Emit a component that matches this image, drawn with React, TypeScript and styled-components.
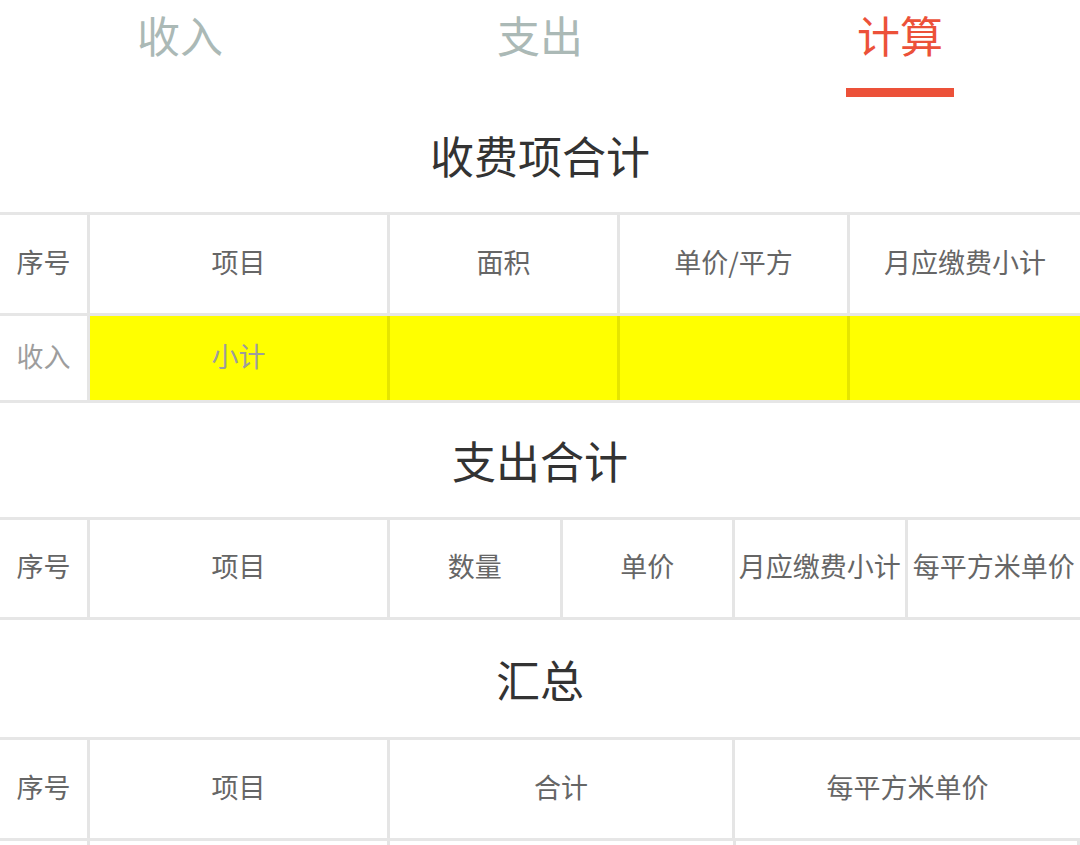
import styled, { createGlobalStyle } from "styled-components";

const GlobalStyle = createGlobalStyle`
    body {
        margin: 0;
        background: #fff;
        font-family: "Noto Sans CJK SC", "Noto Sans", sans-serif;
    }
`;

const Page = styled.div`
    width: 1080px;
    overflow: hidden;
`;

const TabBar = styled.nav`
    display: grid;
    grid-template-columns: repeat(3, 1fr);
`;

const Tab = styled.div<{ $active?: boolean }>`
    display: flex;
    flex-direction: column;
    align-items: center;
    height: 97px;
    color: ${(p) => (p.$active ? "#ec5139" : "#abb9b6")};
`;

const TabLabel = styled.span`
    height: 76px;
    line-height: 68px;
    font-size: 43px;
`;

const Underline = styled.div<{ $active?: boolean }>`
    margin-top: 12px;
    width: 108px;
    height: 9px;
    background: ${(p) => (p.$active ? "#ec5139" : "transparent")};
`;

const SectionTitle = styled.h2<{ $height: number }>`
    margin: 0;
    height: ${(p) => p.$height}px;
    display: flex;
    align-items: center;
    justify-content: center;
    font-size: 44px;
    font-weight: normal;
    color: #333;
`;

const Table = styled.div`
    border-top: 3px solid #e6e6e6;
`;

const Row = styled.div<{ $cols: number; $height: number; $split?: string }>`
    display: grid;
    grid-template-columns: 90px 300px ${(p) => p.$split ?? `repeat(${p.$cols}, 1fr)`};
    height: ${(p) => p.$height}px;
    border-bottom: 3px solid #e6e6e6;
`;

const Cell = styled.div<{ $fill?: string; $muted?: boolean; $edge?: boolean }>`
    display: flex;
    align-items: center;
    justify-content: center;
    box-sizing: border-box;
    padding-bottom: 6px;
    background: ${(p) => p.$fill ?? "#fff"};
    border-right: 3px solid rgba(0, 0, 0, 0.1);
    font-size: 27px;
    color: ${(p) => (p.$muted ? "#9d9d9d" : "#666")};
    white-space: nowrap;

    &:last-child {
        border-right: ${(p) => (p.$edge ? "3px solid rgba(0, 0, 0, 0.1)" : "none")};
    }
`;

const YELLOW = "#ffff00";

export default function App() {
    return (
        <Page>
            <GlobalStyle />
            <TabBar>
                <Tab><TabLabel>收入</TabLabel><Underline /></Tab>
                <Tab><TabLabel>支出</TabLabel><Underline /></Tab>
                <Tab $active><TabLabel>计算</TabLabel><Underline $active /></Tab>
            </TabBar>

            <SectionTitle $height={115}>收费项合计</SectionTitle>
            <Table>
                <Row $cols={3} $height={98}>
                    <Cell>序号</Cell>
                    <Cell>项目</Cell>
                    <Cell>面积</Cell>
                    <Cell>单价/平方</Cell>
                    <Cell>月应缴费小计</Cell>
                </Row>
                <Row $cols={3} $height={84}>
                    <Cell $muted>收入</Cell>
                    <Cell $muted $fill={YELLOW}>小计</Cell>
                    <Cell $fill={YELLOW} />
                    <Cell $fill={YELLOW} />
                    <Cell $fill={YELLOW} />
                </Row>
            </Table>

            <SectionTitle $height={114}>支出合计</SectionTitle>
            <Table>
                <Row $cols={4} $height={97}>
                    <Cell>序号</Cell>
                    <Cell>项目</Cell>
                    <Cell>数量</Cell>
                    <Cell>单价</Cell>
                    <Cell>月应缴费小计</Cell>
                    <Cell>每平方米单价</Cell>
                </Row>
            </Table>

            <SectionTitle $height={117}>汇总</SectionTitle>
            <Table>
                <Row $cols={2} $height={98}>
                    <Cell>序号</Cell>
                    <Cell>项目</Cell>
                    <Cell>合计</Cell>
                    <Cell>每平方米单价</Cell>
                </Row>
                <Row $cols={2} $height={98} $split="346px 344px">
                    <Cell />
                    <Cell />
                    <Cell />
                    <Cell $edge />
                </Row>
            </Table>
        </Page>
    );
}
